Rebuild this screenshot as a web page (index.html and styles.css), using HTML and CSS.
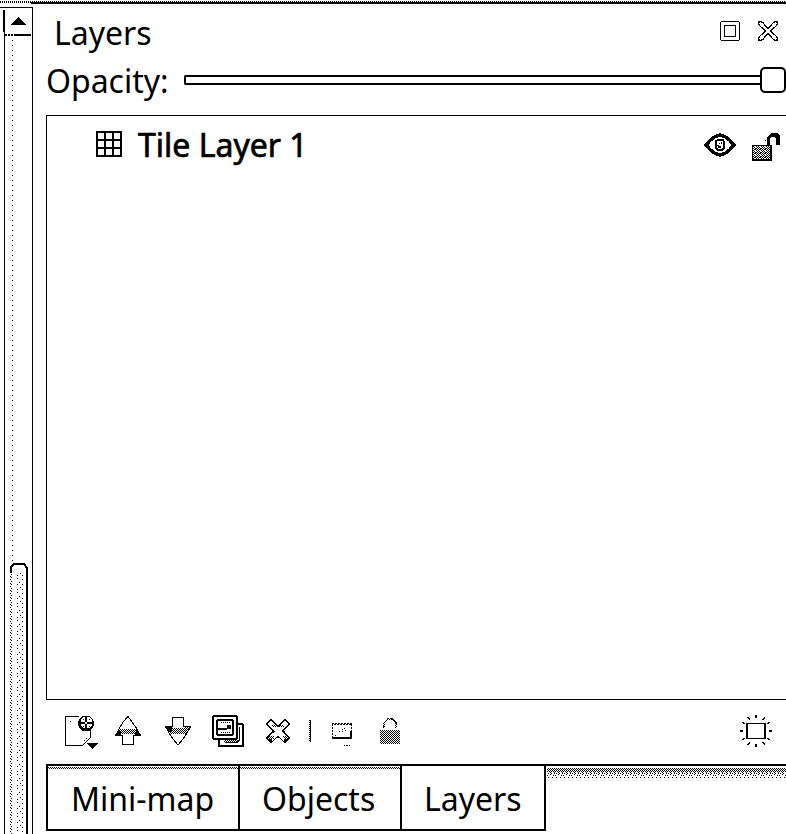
FILE: index.html
```html
<!DOCTYPE html>
<html lang="en">
<head>
<meta charset="utf-8">
<title>Layers</title>
<link rel="stylesheet" href="styles.css">
</head>
<body>
<svg class="defs" width="0" height="0" aria-hidden="true">
  <defs>
    <pattern id="half" width="2" height="2" patternUnits="userSpaceOnUse"><path d="M0 0h1v1H0zM1 1h1v1H1z"/></pattern>
    <pattern id="dense" width="5" height="4" patternUnits="userSpaceOnUse"><path d="M0 0h1v1H0zM2 0h2v1H2zM1 1h1v1H1zM4 1h1v1H4zM0 2h1v1H0zM2 2h1v1H2zM1 3h1v1H1zM3 3h2v1H3z"/></pattern>
    <pattern id="light" width="8" height="7" patternUnits="userSpaceOnUse"><path d="M0 0h1v1H0zM2 0h1v1H2zM5 0h1v1H5zM1 2h1v1H1zM4 1h1v1H4zM7 2h1v1H7zM2 4h1v1H2zM6 4h1v1H6zM0 6h1v1H0zM4 6h1v1H4z"/></pattern>
    <pattern id="speckle" width="18" height="14" patternUnits="userSpaceOnUse"><path d="M1 0h1v1H1zM0 2h1v1H0zM1 4h1v1H1zM0 6h1v1H0zM1 7h1v1H1zM0 9h1v1H0zM1 11h1v1H1zM0 13h1v1H0zM7 1h1v1H7zM12 2h1v1h-1zM9 5h1v1H9zM7 7h1v1H7zM12 7h1v1h-1zM10 10h1v1h-1zM7 12h1v1H7zM12 12h1v1h-1z"/></pattern>
  </defs>
</svg>
<div class="topline"></div>
<div class="window">
  <div class="scrollbar">
    <div class="scroll-up"><svg width="16" height="8" viewBox="0 0 16 8"><path d="M0 8 8 0l8 8z"/></svg></div>
    <div class="track"></div>
    <div class="thumb"><svg width="18" height="271" viewBox="0 0 18 271"><path d="M0 8h16v263H0z" fill="url(#speckle)"/><path class="edge" d="M1 10V4l3-3h10l3 4v266"/></svg></div>
  </div>
  <main class="dock">
    <header class="titlebar">
      <span class="title">Layers</span>
      <svg class="float" width="20" height="20" viewBox="0 0 20 20"><path d="M1.500.500h17l1 1v17l-1 1h-17l-1-1v-17zM4.500 4.500h11v11h-11z"/></svg>
      <svg class="close" width="20" height="20" viewBox="0 0 20 20"><path d="M1 1Q4 0 6 3l4 4.500L14 3Q16 0 19 1q1 3-2 5l-4.500 4 4.500 4q3 2 2 5-3 1-5-2l-4-4.500L6 17q-2 3-5 2-1-3 2-5l4.500-4L3 6Q0 4 1 1z"/></svg>
    </header>
    <div class="opacity">
      <span class="opacity-label">Opacity:</span>
      <div class="slider"><div class="groove"></div><div class="handle"></div></div>
    </div>
    <section class="list">
      <div class="layer">
        <svg class="grid" width="26" height="26" viewBox="0 0 26 26"><path d="M1 1h24v24H1zM9 1v24M17 1v24M1 9h24M1 17h24"/></svg>
        <span class="name">Tile Layer 1</span>
        <svg class="eye" width="32" height="24" viewBox="0 0 32 24"><path class="lid" d="M2 12 6 7.500 11 3.500 16 2l5 1.500 5 4 4 4.500-4 4.500-5 4-5 1.500-5-1.500-5-4z"/><path class="iris" d="M12 8l2-1h5l1 2v6l-2 2h-4l-2-2z"/><path d="M13 12h2v1h2v2h-3v-2h-1zM17 9h1v2h-1zM15 10h1v1h-1z"/></svg>
        <svg class="lock" width="28" height="28" viewBox="0 0 28 28"><rect x="0" y="12" width="20" height="16" fill="url(#dense)"/><path class="body" d="M.5 12.500h19v15H.5zM18.500 12v15M0 26.500h20"/><path d="M15 12V4l3-3 1-1h6l3 3v9h-4V6l-2-2h-3l-1 2v6zM13 7h1v1h-1z"/></svg>
      </div>
    </section>
    <div class="toolbar">
      <svg class="new" width="33" height="34" viewBox="0 0 33 34"><path class="line" d="M14 1.500H.5v29h17l8-8V15M18.500 25h1M20.500 23h1"/><path d="M5 6h1v1H5z"/><circle cx="21" cy="8.500" r="8"/><circle cx="21.500" cy="7.500" r="6" fill="#fff"/><path class="plus" d="M21 2v5M21 9v5M15 8h5M22 8h5"/><path d="M21 28h12l-6 6zM18 4h1v1h-1zM24 4h1v1h-1zM18 11h1v1h-1zM24 11h1v1h-1z"/></svg>
      <svg class="up" width="26" height="29" viewBox="0 0 26 29"><path d="M0 20h6v-2l-1-4H4zM26 20h-6v-2l1-4h1z"/><path d="M4 13h18v5H4z" fill="url(#half)"/><path class="line" d="M13 .500 8 6l-4 7-3.500 6.500h7v9h11v-9h7L22 13 17 6z"/></svg>
      <svg class="down" width="26" height="29" viewBox="0 0 26 29"><path d="M1 10h6v2l-1 4H5z"/><path d="M4 11h18v6H5zM19 9h6v4l-3 3h-3z" fill="url(#half)"/><path class="line" d="M7.500.500h11v9h7L22 16l-4 6-5 6-5-6-4-6L.500 9.500h7z"/></svg>
      <svg class="dup" width="32" height="32" viewBox="0 0 32 32"><path class="outer" d="M25 9h5l1 1v21H7v-8"/><path class="outer" d="M2 1h22l1 1v21l-1 1H2l-1-1V2z"/><path class="frame" d="M5 6l1-1h14l1 1v13l-1 1H6l-1-1z"/><path class="thin" d="M27.500 12v13l-2 2H13"/><path d="M8 7h10v1H8zM8 17h10v1H8zM12 25h14v3H12z" fill="url(#half)"/><path d="M15 10h4v4h-4v1H6v-2h9z"/></svg>
      <svg class="del" width="24" height="24" viewBox="0 0 24 24"><path class="line" d="M5 .500l7 7 7-7 4.500 4.500-7 7 7 7-4.500 4.500-7-6-7 6L.500 19l7-7-7-7z"/><path d="M1 17h7v3H3zM16 17h7v3h-4zM6 6h12v2H6zM6 11h3v3H6zM16 11h3v3h-3z" fill="url(#half)"/><path d="M3 20h3v2H4zM18 20h3l-1 2h-2z"/></svg>
      <i class="sep"></i>
      <svg class="view" width="20" height="23" viewBox="0 0 20 23"><path class="dash" d="M0 .500h20M.500 1v14M19.500 1v8M2 1.500h18"/><path d="M0 14h20v2H0zM18 8h2v7h-2z"/><path d="M10 6h1v1h-1zM12 5h1v1h-1zM10 8h1v1h-1zM7 8h1v1H7zM13 7h1v1h-1zM3 12h1v1H3zM12 22h1v1h-1zM14 22h2v1h-2zM17 22h1v1h-1z"/></svg>
      <svg class="padlock" width="20" height="26" viewBox="0 0 20 26"><rect y="12" width="20" height="14" fill="url(#half)"/><path d="M3 4h2l3-4h5l4 4v6h-2V5l-3-3H8L5 5v5H3z" fill="url(#half)"/><path class="dash" d="M3.500 9V5.500L8 .500h4l4.500 4.500v4"/></svg>
      <svg class="highlight" width="32" height="32" viewBox="0 0 32 32"><path d="M6 8h20v16H6zM8 9v14h16V9z" fill-rule="evenodd"/><path d="M15 0h2v3h-2zM15 29h2v3h-2zM0 15h3v2H0zM29 15h3v2h-3zM7 2h1l2 2v1H9L7 3zM24 2h1v1l-2 2h-1V4zM7 29l2-2h1v1l-2 2H7zM22 27h1l2 2v1h-1l-2-2zM2 7h1l2 1v1H4L2 8zM29 7h1v1l-2 1h-1V8zM2 24l2-1h1v1l-2 1H2zM27 23h1l2 1v1h-1l-2-1z"/></svg>
    </div>
    <nav class="tabs">
      <div class="tab tab-map"><span>Mini-map</span></div>
      <div class="tab tab-objects"><span>Objects</span></div>
      <div class="tab tab-layers"><span>Layers</span></div>
      <div class="rest"><svg width="242" height="13"><path d="M1 2h241v4H1z" fill="url(#half)"/><path d="M1 6h241v6H1z" fill="url(#light)"/></svg></div>
    </nav>
  </main>
</div>
</body>
</html>
```
FILE: styles.css
```css
* { box-sizing: border-box; }
body { margin: 0; width: 786px; height: 834px; overflow: hidden; background: #fff; color: #000; font: 32px/44px "Noto Sans", sans-serif; white-space: nowrap; }
svg { display: block; flex: none; shape-rendering: crispEdges; }
.defs { position: absolute; }
.topline { height: 4px; background: linear-gradient(#000, #000) 31px 2px / 755px 2px no-repeat, repeating-linear-gradient(90deg, #000 0 1px, #fff 1px 2px) 0 1px / 786px 2px no-repeat; }
.window { display: flex; height: 830px; }
.scrollbar { width: 33px; margin-top: 3px; border-right: 1px solid #000; border-top: 1px solid #000; display: flex; flex-direction: column; background: linear-gradient(#000, #000) 4px 2px / 1px 824px no-repeat; }
.scroll-up { height: 28px; margin-left: 3px; padding: 9px 0 0 7px; background: linear-gradient(#000, #000) 0 2px / 2px 22px no-repeat, linear-gradient(#000, #000) 12px 26px / 16px 2px no-repeat, repeating-linear-gradient(90deg, #000 0 2px, #fff 2px 3px) 2px 26px / 10px 2px no-repeat; }
.track { height: 527px; margin-left: 12px; width: 1px; background: repeating-linear-gradient(#fff 0 4px, #000 4px 5px); }
.thumb { flex: 1; margin-left: 10px; }
.edge { fill: none; stroke: #000; stroke-width: 2; }
.dock { flex: 1; min-width: 0; padding: 7px 0 0 13px; display: flex; flex-direction: column; }
.titlebar { height: 48px; display: flex; padding-left: 8px; }
.title { flex: 1; }
.float, .close, .line { fill: none; stroke: #000; stroke-width: 1; }
.float { margin-top: 10px; }
.close { margin: 10px 8px 0 18px; stroke-width: 1.3; }
.opacity { height: 56px; display: flex; }
.opacity-label { width: 138px; }
.slider { flex: 1; display: flex; padding-top: 8px; }
.groove { width: 576px; height: 10px; margin-top: 8px; border: 2px solid #000; border-right: 0; border-radius: 2px 0 0 2px; }
.handle { width: 26px; height: 26px; border: 2px solid #000; border-radius: 5px; background: #fff; }
.list { height: 585px; border: 1px solid #000; border-right: 0; padding-top: 7px; }
.layer { display: flex; height: 44px; padding-left: 49px; }
.grid { margin-top: 8px; fill: none; stroke: #000; stroke-width: 2; }
.name { flex: 1; margin-left: 16px; -webkit-text-stroke: .7px #000; }
.eye { margin-top: 10px; }
.lid { fill: none; stroke: #000; stroke-width: 3.4; }
.iris { fill: none; stroke: #000; stroke-width: 2; }
.lock { margin: 10px 6px 0 16px; }
.body { fill: none; stroke: #000; }
.toolbar { height: 64px; display: flex; padding: 15px 0 0 19px; }
.up { margin: 1px 0 0 17px; }
.down { margin: 2px 0 0 24px; }
.dup { margin-left: 21px; }
.del { margin: 4px 0 0 22px; }
.sep { width: 2px; height: 22px; margin: 5px 0 0 19px; background: linear-gradient(#000, #000) 1px 0 / 1px 22px no-repeat, repeating-linear-gradient(#000 0 1px, #fff 1px 2px); }
.view { margin: 8px 0 0 21px; }
.padlock { margin: 3px 0 0 28px; }
.highlight { margin-left: auto; margin-right: 14px; }
.plus { stroke: #000; stroke-width: 2; fill: none; }
.outer { fill: #fff; stroke: #000; stroke-width: 2; }
.frame { fill: none; stroke: #000; stroke-width: 2; }
.thin { fill: none; stroke: #000; stroke-width: 1; }
.dash { fill: none; stroke: #000; stroke-dasharray: 2 1; }
.tabs { height: 67px; display: flex; }
.tab { border-top: 2px solid #000; border-right: 2px solid #000; border-bottom: 2px solid #000; padding-top: 11px; height: 67px; }
.tab-map, .tab-objects { background: repeating-conic-gradient(#000 0 25%, #fff 0 50%) 3px 1px / 2px 2px repeat-x; }
.tab-map { width: 194px; border-left: 2px solid #000; padding-left: 23px; }
.tab-objects { width: 162px; padding-left: 22px; }
.tab-layers { width: 144px; padding-left: 22px; }
.rest { flex: 1; border-top: 2px solid #000; overflow: hidden; }
```
